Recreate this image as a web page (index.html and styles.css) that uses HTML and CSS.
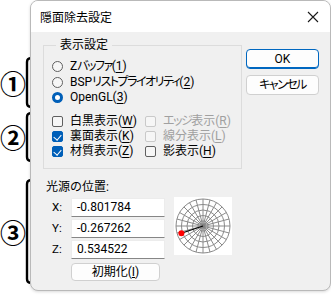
FILE: index.html
```html
<!DOCTYPE html>
<html lang="ja">
<head>
  <meta charset="UTF-8" />
  <title>隠面除去設定</title>
  <link rel="stylesheet" href="styles.css">
</head>
<body>

  <div class="marks">
    <div class="mark mark-1">
      <span class="num">①</span>
      <svg class="brace" width="8" height="51"><path d="M7,1.2 Q3,1.2 3,5 L3,46 Q3,49.8 7,49.8"/></svg>
    </div>
    <div class="mark mark-2">
      <span class="num">②</span>
      <svg class="brace" width="8" height="50"><path d="M7,1.2 Q3,1.2 3,5 L3,45 Q3,48.8 7,48.8"/></svg>
    </div>
    <div class="mark mark-3">
      <span class="num">③</span>
      <svg class="brace" width="8" height="105"><path d="M7,1.2 Q3,1.2 3,5 L3,100 Q3,103.8 7,103.8"/></svg>
    </div>
  </div>

  <div class="dialog">
    <div class="titlebar">
      <span class="title">隠面除去設定</span>
      <svg class="close" width="12" height="12"><path d="M1,1 L11,11 M11,1 L1,11"/></svg>
    </div>

    <div class="dialog-body">
      <div class="left-col">
        <fieldset class="group">
          <legend>表示設定</legend>
          <div class="radios">
            <div class="row"><span class="radio"></span>Z<span class="kana">バッファ</span>(<u>1</u>)</div>
            <div class="row"><span class="radio"></span>BSP<span class="kana">リストプライオリティ</span>(<u>2</u>)</div>
            <div class="row"><span class="radio checked"></span>OpenGL(<u>3</u>)</div>
          </div>
          <div class="checks">
            <div class="row"><span class="check"></span>白黒表示(<u>W</u>)</div>
            <div class="row disabled"><span class="check"></span><span class="kana">エッジ</span>表示(<u>R</u>)</div>
            <div class="row"><span class="check checked"></span>裏面表示(<u>K</u>)</div>
            <div class="row disabled"><span class="check"></span>線分表示(<u>L</u>)</div>
            <div class="row"><span class="check checked"></span>材質表示(<u>Z</u>)</div>
            <div class="row"><span class="check"></span>影表示(<u>H</u>)</div>
          </div>
        </fieldset>

        <div class="light">
          <div class="light-title">光源の位置:</div>
          <div class="light-body">
            <div class="coords">
              <div class="coord"><span class="axis">X:</span><span class="field">-0.801784</span></div>
              <div class="coord"><span class="axis">Y:</span><span class="field">-0.267262</span></div>
              <div class="coord"><span class="axis">Z:</span><span class="field">0.534522</span></div>
              <button class="btn reset">初期化(<u>I</u>)</button>
            </div>
            <svg class="compass" width="58" height="58" viewBox="0 0 58 58">
              <g class="grid">
                <circle cx="29" cy="29" r="27"/>
                <circle cx="29" cy="29" r="21.5"/>
                <circle cx="29" cy="29" r="16"/>
                <circle cx="29" cy="29" r="10.5"/>
                <circle cx="29" cy="29" r="5"/>
                <path d="M29,2 L29,56 M2,29 L56,29
                         M15.5,5.6 L42.5,52.4 M42.5,5.6 L15.5,52.4
                         M5.6,15.5 L52.4,42.5 M52.4,15.5 L5.6,42.5
                         M22,2.9 L36,55.1 M36,2.9 L22,55.1
                         M2.9,22 L55.1,36 M55.1,22 L2.9,36
                         M9.9,9.9 L48.1,48.1 M48.1,9.9 L9.9,48.1"/>
              </g>
              <circle class="hub" cx="29" cy="29" r="2"/>
              <line class="ray" x1="29" y1="29" x2="7.4" y2="36.2"/>
              <circle class="sun" cx="7.4" cy="36.2" r="3"/>
            </svg>
          </div>
        </div>
      </div>

      <div class="right-col">
        <button class="btn ok">OK</button>
        <button class="btn"><span class="kana">キャンセル</span></button>
      </div>
    </div>
  </div>

</body>
</html>
```

FILE: styles.css
```css
body {
  margin: 0;
  background: #ffffff;
  font-family: Roboto, "Noto Sans CJK JP", sans-serif;
  font-size: 12px;
  color: #000;
  display: flex;
  width: 331px;
  height: 295px;
  overflow: hidden;
}

/* annotation marks on the left */
.marks {
  width: 30px;
  flex: 0 0 30px;
}

.mark {
  display: flex;
  align-items: center;
}

.mark-1 { margin-top: 57px; }
.mark-2 { margin-top: 4px; }
.mark-3 { margin-top: 17px; }

.num {
  width: 25px;
  margin-left: 0;
  font-family: "Noto Sans CJK JP", sans-serif;
  font-size: 26px;
  font-weight: bold;
  line-height: 26px;
  letter-spacing: -2px;
}

.brace path {
  fill: none;
  stroke: #000;
  stroke-width: 2.4;
}

/* dialog frame */
.dialog {
  flex: 0 0 301px;
  height: 291px;
  box-sizing: border-box;
  border: 1px solid #b9b9b9;
  border-radius: 8px;
  background: #f0f0f0;
  overflow: hidden;
  box-shadow: 0 1px 3px rgba(0,0,0,0.15);
}

.titlebar {
  height: 31px;
  background: #ffffff;
  display: flex;
  align-items: center;
  justify-content: space-between;
  padding: 0 11px 0 9px;
}

.title {
  font-family: "Noto Sans CJK JP", sans-serif;
  font-size: 12px;
  margin-top: -1px;
}

.close path {
  stroke: #1a1a1a;
  stroke-width: 1.1;
}

.dialog-body {
  display: flex;
  padding: 5px 11px 0 12px;
  font-feature-settings: "palt";
}

.kana {
  letter-spacing: -1.5px;
}

.left-col {
  width: 199px;
}

.right-col {
  margin-left: auto;
  margin-top: 12px;
  display: flex;
  flex-direction: column;
  gap: 6px;
}

/* group box */
.group {
  margin: 0;
  padding: 0 8px 9px 8px;
  border: 1px solid #dcdcdc;
  border-radius: 0;
  min-width: 0;
}

.group legend {
  padding: 0 4px;
  margin-left: 4px;
  line-height: 16px;
}

.radios {
  margin-top: 6px;
}

.row {
  display: flex;
  align-items: center;
  height: 15.5px;
  line-height: 15px;
  white-space: nowrap;
}

.row u {
  text-decoration-thickness: 1px;
  text-underline-offset: 2px;
}

.checks {
  margin-top: 8px;
  display: grid;
  grid-template-columns: 93px auto;
}

.checks .row {
  height: 15px;
}

.disabled {
  color: #a0a0a0;
}

.radio,
.check {
  width: 11px;
  height: 11px;
  box-sizing: border-box;
  border: 1px solid #5f5f5f;
  background: #f6f6f6;
  margin-right: 7px;
  flex: 0 0 auto;
}

.radio {
  border-radius: 50%;
}

.radio.checked {
  border: 3px solid #005fb8;
  background: #fff;
}

.check {
  border-radius: 2px;
}

.disabled .check {
  border-color: #c9c9c9;
}

.check.checked {
  border-color: #005fb8;
  background: #005fb8;
  position: relative;
}

.check.checked::after {
  content: "";
  position: absolute;
  left: 2px;
  top: 1px;
  width: 4px;
  height: 6px;
  border: solid #fff;
  border-width: 0 1px 1px 0;
  transform: rotate(40deg);
}

/* light position */
.light {
  padding-left: 3px;
  margin-top: 10px;
}

.light-title {
  line-height: 16px;
  font-feature-settings: normal;
}

.light-body {
  display: flex;
  align-items: flex-start;
  margin-top: 3px;
}

.coords {
  display: flex;
  flex-direction: column;
  gap: 2px;
}

.coord {
  display: flex;
  align-items: center;
}

.axis {
  padding-left: 6px;
  box-sizing: border-box;
  width: 25px;
  font-size: 11.5px;
}

.field {
  width: 94px;
  height: 19px;
  box-sizing: border-box;
  background: #fff;
  border: 1px solid #ececec;
  border-bottom-color: #868686;
  padding: 0 5px;
  line-height: 17px;
}

.compass {
  margin-left: 9px;
  margin-top: -1px;
  background: #fff;
}

.compass .grid circle,
.compass .grid path {
  fill: none;
  stroke: #8a8a8a;
  stroke-width: 1;
}

.hub { fill: #808080; }
.ray { stroke: #000; stroke-width: 1.2; }
.sun { fill: #ff0000; }

/* buttons */
.btn {
  font-family: inherit;
  font-size: 12px;
  width: 73px;
  height: 20px;
  padding: 0;
  background: #fdfdfd;
  border: 1px solid #d0d0d0;
  border-radius: 4px;
  color: #000;
  line-height: 18px;
  font-feature-settings: "palt";
}

.btn.ok {
  border-color: #0067c0;
  box-shadow: inset 0 -1px 0 #0067c0;
}

.reset {
  width: 89px;
  height: 18px;
  line-height: 16px;
  margin-top: 2px;
  margin-left: 25px;
}
```
